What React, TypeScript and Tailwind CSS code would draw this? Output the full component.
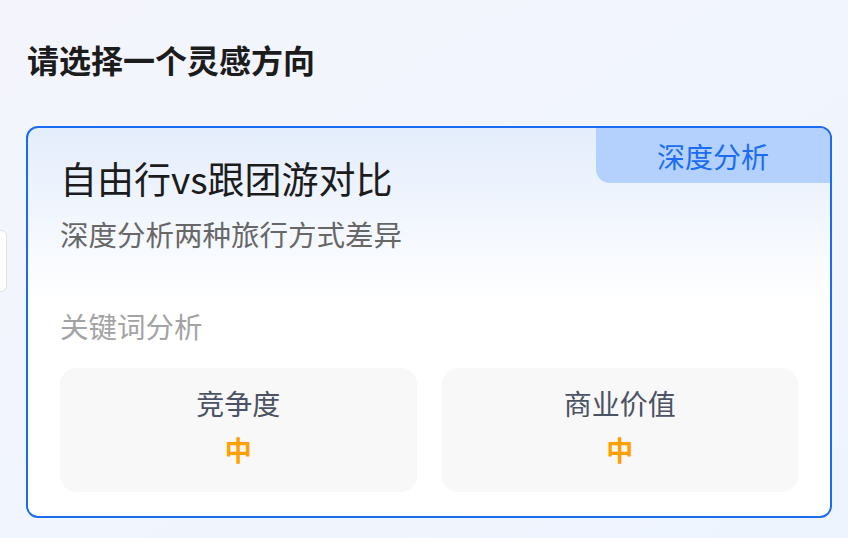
import React from 'react'

const font = { fontFamily: '"Noto Sans CJK SC", "Noto Sans", sans-serif' }

function Metric({ label, value }: { label: string; value: string }) {
  return (
    <div className="flex-1 h-[124px] rounded-2xl bg-[#f8f8f9] flex flex-col items-center pt-[21px]">
      <span className="text-[28px] leading-none text-[#4a5263]">{label}</span>
      <span className="mt-[19px] text-[27px] leading-none font-bold text-[#ff9f00]">{value}</span>
    </div>
  )
}

export default function App() {
  return (
    <div
      style={font}
      className="relative w-[848px] h-[538px] overflow-hidden bg-linear-to-br from-[#f4f5fc] via-[#f1f5fd] to-[#eef4fe]"
    >
      {/* cut-off card on the left edge */}
      <div className="absolute left-[-20px] top-[230px] w-[27px] h-[62px] rounded-md border border-[#e3e3e3] bg-white" />

      <h1 className="pl-[27px] pt-[43px] text-[32px] leading-none font-bold text-[#1c1c1c]">请选择一个灵感方向</h1>

      <div className="relative ml-[26px] mt-[51px] w-[806px] h-[392px] rounded-xl border-2 border-[#1b6cf2] overflow-hidden bg-linear-to-b from-[#e4edfc] to-white to-[45%]">
        <div className="absolute right-0 top-0 w-[234px] h-[55px] rounded-bl-[14px] bg-[#b3d1fc] flex items-center justify-center">
          <span className="text-[28px] leading-none text-[#1b6cf2]">深度分析</span>
        </div>

        <div className="px-8 pt-[32px]">
          <div className="text-[37px] leading-none text-[#1c1c1c]">自由行vs跟团游对比</div>
          <div className="mt-[23px] text-[28.5px] leading-none text-[#676767]">深度分析两种旅行方式差异</div>
          <div className="mt-[63px] text-[28.5px] leading-none text-[#a3a3a3]">关键词分析</div>
          <div className="mt-[28px] flex gap-[25px]">
            <Metric label="竞争度" value="中" />
            <Metric label="商业价值" value="中" />
          </div>
        </div>
      </div>
    </div>
  )
}
